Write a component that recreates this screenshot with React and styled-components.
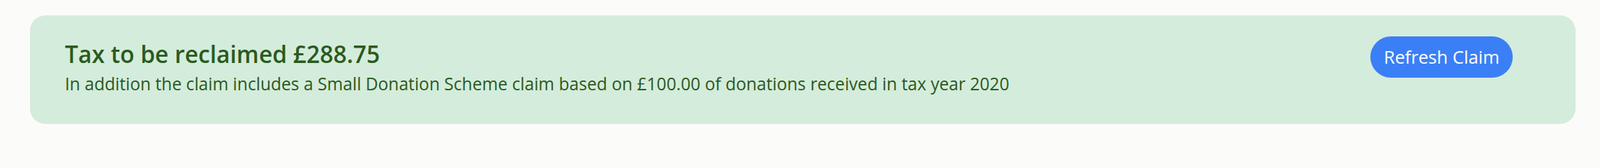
import React from "react";
import styled, { createGlobalStyle } from "styled-components";

const GlobalStyle = createGlobalStyle`
  html, body {
    margin: 0;
    padding: 0;
    background: #fbfbf9;
    font-family: "Open Sans", "Noto Sans", sans-serif;
  }
`;

const Page = styled.div`
  padding: 22px 35px 31px 43px;
`;

const Card = styled.section`
  display: flex;
  align-items: flex-start;
  justify-content: space-between;
  gap: 24px;
  min-height: 155px;
  box-sizing: border-box;
  padding: 30px 90px 39px 50px;
  background: #d4ecdb;
  border-radius: 22px;
  color: #2a5a20;
`;

const Content = styled.div`
  display: flex;
  flex-direction: column;
  gap: 4px;
  padding-top: 5px;
`;

const Title = styled.h2`
  margin: 0;
  font-size: 33.6px;
  font-weight: 600;
  line-height: 40px;
`;

const Description = styled.p`
  margin: 0;
  font-size: 24.6px;
  font-weight: 400;
  line-height: 37px;
`;

const PillButton = styled.button`
  flex: none;
  border: none;
  border-radius: 9999px;
  background: #3b7ff6;
  color: #ffffff;
  font-family: inherit;
  font-size: 25.7px;
  line-height: 38px;
  padding: 10.5px 19px;
  cursor: pointer;
`;

export default function App() {
  return (
    <>
      <GlobalStyle />
      <Page>
        <Card>
          <Content>
            <Title>Tax to be reclaimed £288.75</Title>
            <Description>
              In addition the claim includes a Small Donation Scheme claim based on £100.00 of donations received in tax year 2020
            </Description>
          </Content>
          <PillButton>Refresh Claim</PillButton>
        </Card>
      </Page>
    </>
  );
}
